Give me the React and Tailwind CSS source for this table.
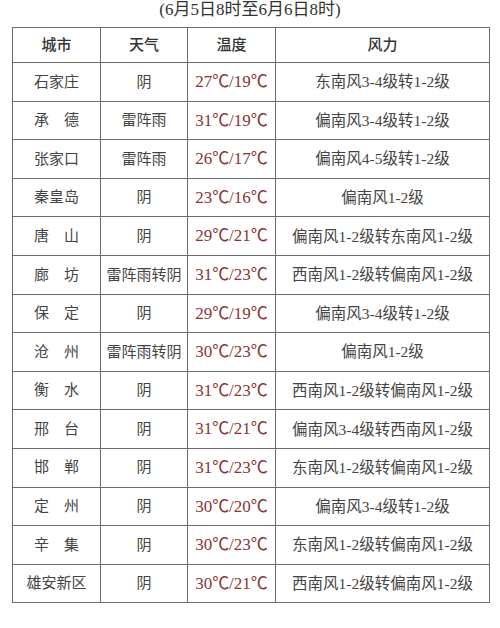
import React from 'react';

const rows = [
  ['石家庄', '阴', '27℃/19℃', '东南风3-4级转1-2级'],
  ['承\u3000德', '雷阵雨', '31℃/19℃', '偏南风3-4级转1-2级'],
  ['张家口', '雷阵雨', '26℃/17℃', '偏南风4-5级转1-2级'],
  ['秦皇岛', '阴', '23℃/16℃', '偏南风1-2级'],
  ['唐\u3000山', '阴', '29℃/21℃', '偏南风1-2级转东南风1-2级'],
  ['廊\u3000坊', '雷阵雨转阴', '31℃/23℃', '西南风1-2级转偏南风1-2级'],
  ['保\u3000定', '阴', '29℃/19℃', '偏南风3-4级转1-2级'],
  ['沧\u3000州', '雷阵雨转阴', '30℃/23℃', '偏南风1-2级'],
  ['衡\u3000水', '阴', '31℃/23℃', '西南风1-2级转偏南风1-2级'],
  ['邢\u3000台', '阴', '31℃/21℃', '偏南风3-4级转西南风1-2级'],
  ['邯\u3000郸', '阴', '31℃/23℃', '东南风1-2级转偏南风1-2级'],
  ['定\u3000州', '阴', '30℃/20℃', '偏南风3-4级转1-2级'],
  ['辛\u3000集', '阴', '30℃/23℃', '东南风1-2级转偏南风1-2级'],
  ['雄安新区', '阴', '30℃/21℃', '西南风1-2级转偏南风1-2级'],
];

export default function App() {
  return (
    <div
      className="w-[500px] h-[628px] bg-white overflow-hidden text-[#444]"
      style={{ fontFamily: '"Liberation Serif", "Noto Sans CJK SC", serif' }}
    >
      <div className="h-[28px] flex items-start justify-center -mt-[1px] text-[17px] leading-[21px] text-[#333]">
        (6月5日8时至6月6日8时)
      </div>
      <table className="ml-[12px] w-[478px] border-collapse border-[1.5px] border-[#6b6b6b] table-fixed">
        <colgroup>
          <col className="w-[88px]" />
          <col className="w-[87px]" />
          <col className="w-[88px]" />
          <col />
        </colgroup>
        <thead>
          <tr className="h-[35px]">
            {['城市', '天气', '温度', '风力'].map((h) => (
              <th key={h} className="border border-[#6b6b6b] text-[15px] font-medium text-[#333] text-center p-0">
                {h}
              </th>
            ))}
          </tr>
        </thead>
        <tbody>
          {rows.map(([city, weather, temp, wind]) => (
            <tr key={city} className="h-[38.6px]">
              <td className="border border-[#6b6b6b] text-center text-[15px] p-0 whitespace-nowrap">{city}</td>
              <td className="border border-[#6b6b6b] text-center text-[15px] p-0 whitespace-nowrap">{weather}</td>
              <td className="border border-[#6b6b6b] text-center text-[17px] p-0 whitespace-nowrap text-[#8a3434]">{temp}</td>
              <td className="border border-[#6b6b6b] text-center text-[15.5px] p-0 whitespace-nowrap">{wind}</td>
            </tr>
          ))}
        </tbody>
      </table>
    </div>
  );
}
